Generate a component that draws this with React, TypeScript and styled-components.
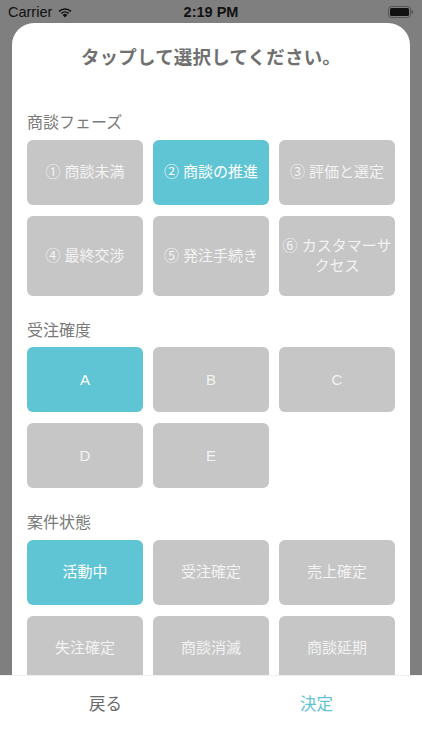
import React from "react";
import styled, { createGlobalStyle } from "styled-components";

const Global = createGlobalStyle`
  html, body { margin: 0; padding: 0; background: #7f7f7f; }
  body { font-family: "Liberation Sans", "Noto Sans CJK JP", sans-serif; }
  * { box-sizing: border-box; }
`;

const Screen = styled.div`
  width: 422px;
  height: 750px;
  display: flex;
  flex-direction: column;
  background: #7f7f7f;
  overflow: hidden;
`;

const StatusBar = styled.div`
  height: 23px;
  flex: none;
  display: flex;
  align-items: center;
  justify-content: space-between;
  padding: 0 8px 0 8px;
  color: #111;
  font-family: "Liberation Sans", "Noto Sans", sans-serif;
`;

const Carrier = styled.div`
  display: flex;
  align-items: center;
  gap: 5px;
  font-size: 14.5px;
  width: 120px;
`;

const Time = styled.div`
  font-size: 14.5px;
  font-weight: 700;
`;

const Battery = styled.div`
  width: 120px;
  display: flex;
  justify-content: flex-end;
`;

const SheetArea = styled.div`
  flex: 1;
  min-height: 0;
  padding: 0 12px;
  display: flex;
`;

const Sheet = styled.div`
  flex: 1;
  background: #fff;
  border-radius: 22px 22px 0 0;
  overflow: hidden;
  padding: 19px 15px 0;
`;

const Title = styled.h1`
  margin: 0 0 40px;
  text-align: center;
  font-family: "Noto Sans CJK JP", sans-serif;
  font-size: 18.5px;
  line-height: 28px;
  font-weight: 700;
  color: #707070;
  letter-spacing: 0.2px;
`;

const Section = styled.section`
  margin-bottom: 22px;
`;

const Label = styled.div`
  font-family: "Noto Sans CJK JP", sans-serif;
  font-size: 16px;
  line-height: 22px;
  color: #7a7a7a;
  margin-bottom: 7.5px;
`;

const Grid = styled.div`
  display: grid;
  grid-template-columns: repeat(3, 116px);
  column-gap: 10px;
  row-gap: 11px;
`;

const Choice = styled.button<{ $on?: boolean; $tall?: boolean }>`
  height: ${(p) => (p.$tall ? 80 : 65)}px;
  border: none;
  border-radius: 6px;
  background: ${(p) => (p.$on ? "#5fc4d4" : "#c6c6c6")};
  color: ${(p) => (p.$on ? "#ffffff" : "#f3f3f3")};
  font-family: "Liberation Sans", "Noto Sans CJK JP", sans-serif;
  font-size: 15px;
  line-height: 20px;
  padding: 0 2px;
  display: flex;
  align-items: center;
  justify-content: center;
  text-align: center;
`;

const BottomBar = styled.div`
  height: 75px;
  flex: none;
  background: #fff;
  border-top: 1px solid #f0f0f0;
  display: flex;
`;

const BarButton = styled.button<{ $accent?: boolean }>`
  flex: 1;
  height: 54px;
  border: none;
  background: transparent;
  font-family: "Noto Sans CJK JP", sans-serif;
  font-size: 16.5px;
  color: ${(p) => (p.$accent ? "#5fc4d4" : "#6a6a6a")};
`;

type Item = { label: string; on?: boolean };

const phases: Item[] = [
  { label: "① 商談未満" },
  { label: "② 商談の推進", on: true },
  { label: "③ 評価と選定" },
  { label: "④ 最終交渉" },
  { label: "⑤ 発注手続き" },
  { label: "⑥ カスタマーサクセス" },
];
const ranks: Item[] = [
  { label: "A", on: true },
  { label: "B" },
  { label: "C" },
  { label: "D" },
  { label: "E" },
];
const states: Item[] = [
  { label: "活動中", on: true },
  { label: "受注確定" },
  { label: "売上確定" },
  { label: "失注確定" },
  { label: "商談消滅" },
  { label: "商談延期" },
];

const Wifi = () => (
  <svg width="16" height="12" viewBox="0 0 16 12">
    <path d="M8 11.5 L5.6 8.9 A3.4 3.4 0 0 1 10.4 8.9 Z" fill="#111" />
    <path d="M3.7 7 A6.2 6.2 0 0 1 12.3 7 L11.2 8.1 A4.7 4.7 0 0 0 4.8 8.1 Z" fill="#111" />
    <path d="M1.5 4.8 A9.3 9.3 0 0 1 14.5 4.8 L13.4 5.9 A7.8 7.8 0 0 0 2.6 5.9 Z" fill="#111" />
  </svg>
);

const BatteryIcon = () => (
  <svg width="26" height="12" viewBox="0 0 26 12">
    <rect x="0.5" y="0.5" width="22" height="11" rx="3" fill="none" stroke="#555" />
    <rect x="2" y="2" width="19" height="8" rx="1.5" fill="#111" />
    <rect x="23.5" y="4" width="1.5" height="4" rx="0.7" fill="#555" />
  </svg>
);

const Group = ({ title, items, tallSecond }: { title: string; items: Item[]; tallSecond?: boolean }) => (
  <Section>
    <Label>{title}</Label>
    <Grid>
      {items.map((it, i) => (
        <Choice key={it.label} $on={it.on} $tall={tallSecond && i >= 3}>
          {it.label}
        </Choice>
      ))}
    </Grid>
  </Section>
);

export default function App() {
  return (
    <>
      <Global />
      <Screen>
        <StatusBar>
          <Carrier>
            Carrier <Wifi />
          </Carrier>
          <Time>2:19 PM</Time>
          <Battery>
            <BatteryIcon />
          </Battery>
        </StatusBar>
        <SheetArea>
          <Sheet>
            <Title>タップして選択してください。</Title>
            <Group title="商談フェーズ" items={phases} tallSecond />
            <Group title="受注確度" items={ranks} />
            <Group title="案件状態" items={states} />
          </Sheet>
        </SheetArea>
        <BottomBar>
          <BarButton>戻る</BarButton>
          <BarButton $accent>決定</BarButton>
        </BottomBar>
      </Screen>
    </>
  );
}
